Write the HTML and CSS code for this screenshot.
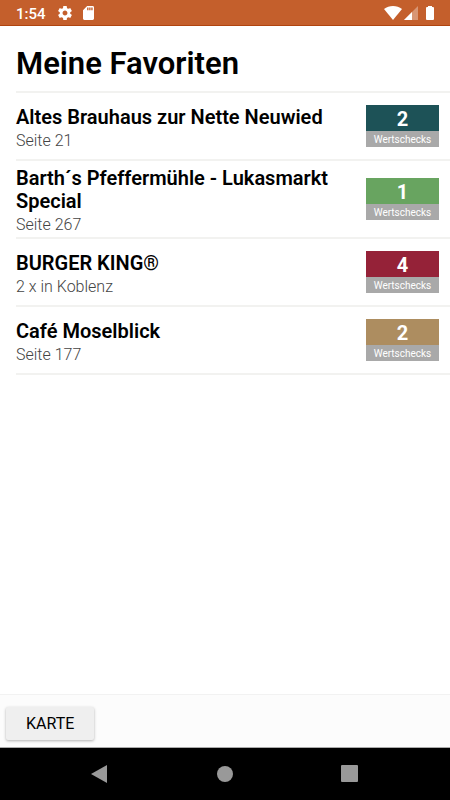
FILE: index.html
```
<!DOCTYPE html>
<html lang="de">
	<head>
		<meta charset="UTF-8">
		<meta name="viewport" content="width=device-width, initial-scale=1.0" />
		<title>Meine Favoriten</title>
		<link rel="stylesheet" href="styles.css">
	</head>
	<body>
		<div class="statusbar">
			<span class="time">1:54</span>
			<svg class="gear" width="14" height="14" viewBox="2 2 20 20"><path fill="#fff" d="M19.43 12.98c.04-.32.07-.64.07-.98s-.03-.66-.07-.98l2.11-1.65c.19-.15.24-.42.12-.64l-2-3.46c-.12-.22-.39-.3-.61-.22l-2.49 1c-.52-.4-1.08-.73-1.69-.98l-.38-2.65C14.46 2.18 14.25 2 14 2h-4c-.25 0-.46.18-.49.42l-.38 2.65c-.61.25-1.17.59-1.69.98l-2.49-1c-.23-.09-.49 0-.61.22l-2 3.46c-.13.22-.07.49.12.64l2.11 1.65c-.04.32-.07.65-.07.98s.03.66.07.98l-2.11 1.65c-.19.15-.24.42-.12.64l2 3.46c.12.22.39.3.61.22l2.49-1c.52.4 1.08.73 1.69.98l.38 2.65c.03.24.24.42.49.42h4c.25 0 .46-.18.49-.42l.38-2.65c.61-.25 1.17-.59 1.69-.98l2.49 1c.23.09.49 0 .61-.22l2-3.46c.12-.22.07-.49-.12-.64l-2.11-1.65zM12 15.500c-1.930 0-3.500-1.570-3.500-3.500s1.570-3.500 3.500-3.500 3.500 1.570 3.500 3.500-1.570 3.500-3.500 3.500z"/></svg>
			<svg width="11" height="14" viewBox="4 2 16 20" preserveAspectRatio="none"><path fill="#fff" d="M18 2h-8L4 8v12c0 1.100.9 2 2 2h12c1.100 0 2-.9 2-2V4c0-1.100-.9-2-2-2zm-6 6h-2V4h2v4zm3 0h-2V4h2v4zm3 0h-2V4h2v4z"/></svg>
			<span class="signals">
				<svg width="18" height="14" viewBox="0 0 18 14"><path fill="#fff" d="M0 3C5-1 13-1 18 3L9 14z"/></svg>
				<svg width="14" height="14" viewBox="0 0 14 14"><path fill="#fff" fill-opacity=".35" d="M14 0v14H0z"/><path fill="#fff" d="M8 6v8H0z"/></svg>
				<svg class="battery" width="8" height="14" viewBox="0 0 8 14"><path fill="#fff" d="M2 0h4v1h1q1 0 1 1v11q0 1-1 1H1q-1 0-1-1V2q0-1 1-1h1z"/></svg>
			</span>
		</div>

		<main>
			<h1>Meine Favoriten</h1>
			<ul class="list">
				<li>
					<div class="text">
						<h2>Altes Brauhaus zur Nette Neuwied</h2>
						<p>Seite 21</p>
					</div>
					<div class="badge teal"><strong>2</strong><span>Wertschecks</span></div>
				</li>
				<li>
					<div class="text">
						<h2>Barth´s Pfeffermühle - Lukasmarkt Special</h2>
						<p>Seite 267</p>
					</div>
					<div class="badge green"><strong>1</strong><span>Wertschecks</span></div>
				</li>
				<li>
					<div class="text">
						<h2>BURGER KING®</h2>
						<p>2 x in Koblenz</p>
					</div>
					<div class="badge red"><strong>4</strong><span>Wertschecks</span></div>
				</li>
				<li>
					<div class="text">
						<h2>Café Moselblick</h2>
						<p>Seite 177</p>
					</div>
					<div class="badge gold"><strong>2</strong><span>Wertschecks</span></div>
				</li>
			</ul>
		</main>

		<div class="toolbar">
			<button type="button" class="karte">KARTE</button>
		</div>

		<nav class="navbar">
			<button type="button" aria-label="Zurück"><svg width="18" height="18" viewBox="0 0 18 18"><path fill="#999" d="M16 0v18L0 9z"/></svg></button>
			<button type="button" aria-label="Startseite"><svg width="18" height="18" viewBox="0 0 18 18"><circle cx="9" cy="9" r="8" fill="#999"/></svg></button>
			<button type="button" aria-label="Übersicht"><svg width="18" height="18" viewBox="0 0 18 18"><rect x="0" y="0" width="17" height="17" rx="1" fill="#999"/></svg></button>
		</nav>
	</body>
</html>
```

FILE: styles.css
```
* {
	box-sizing: border-box;
}

body {
	display: flex;
	flex-direction: column;
	min-height: 100vh;
	margin: 0;
	background: #fff;
	color: #000;
	font-family: Roboto, "Liberation Sans", sans-serif;
}

svg {
	display: block;
}

/* status bar */
.statusbar {
	display: flex;
	align-items: center;
	height: 26px;
	padding: 0 16px;
	background: #c45f2c;
	border-bottom: 1px solid #b0440f;
}

.time {
	padding-top: 2px;
	color: #fff;
	font-size: 15px;
	font-weight: 500;
	line-height: 24px;
}

.gear {
	margin: 0 11px 0 12px;
}

.signals {
	display: flex;
	gap: 2px;
	margin-left: auto;
}

.battery {
	margin-left: 6px;
}

/* favourites */
main {
	flex: 1;
}

h1 {
	margin: 0;
	padding: 20px 16px 9px;
	font-size: 31px;
	font-weight: 600;
	line-height: 36px;
}

.list {
	margin: 0 0 0 16px;
	padding: 0;
	list-style: none;
	border-top: 2px solid #f2f2f0;
}

.list li {
	display: flex;
	align-items: center;
	justify-content: space-between;
	gap: 16px;
	min-height: 68px;
	padding: 0 11px 0 0;
	border-bottom: 2px solid #f2f2f0;
}

.text {
	padding: 6px 0 1px;
}

.text h2 {
	margin: 0;
	font-size: 20px;
	font-weight: 600;
	line-height: 23px;
}

.text p {
	margin: 0;
	color: #444;
	font-size: 16px;
	font-weight: 300;
	line-height: 23px;
}

.badge {
	flex: none;
	width: 73px;
	color: #fff;
	text-align: center;
}

.badge strong {
	display: block;
	padding-top: 2px;
	font-size: 20px;
	font-weight: 700;
	line-height: 24px;
}

.badge span {
	display: block;
	padding-top: 2px;
	background: #a9a9a9;
	font-size: 10px;
	line-height: 14px;
}

.teal {
	background: #1d5257;
}

.green {
	background: #68a460;
}

.red {
	background: #952238;
}

.gold {
	background: #ad8d60;
}

/* bottom toolbar */
.toolbar {
	padding: 12px 6px 7px;
	background: #fcfcfc;
	border-top: 1px solid #f2f2f2;
}

.karte {
	display: block;
	height: 33px;
	padding: 0 20px;
	border: 0;
	border-radius: 2px;
	background: #efefef;
	box-shadow: 0 1px 3px rgba(0, 0, 0, 0.3);
	color: #000;
	font-family: inherit;
	font-size: 16px;
	font-weight: 400;
}

/* system navigation */
.navbar {
	display: flex;
	justify-content: center;
	height: 53px;
	padding: 0 38px;
	background: #000;
	border-top: 1px solid #aaa;
}

.navbar button {
	display: flex;
	flex: 1;
	align-items: center;
	justify-content: center;
	padding: 0;
	border: 0;
	background: none;
}
```
